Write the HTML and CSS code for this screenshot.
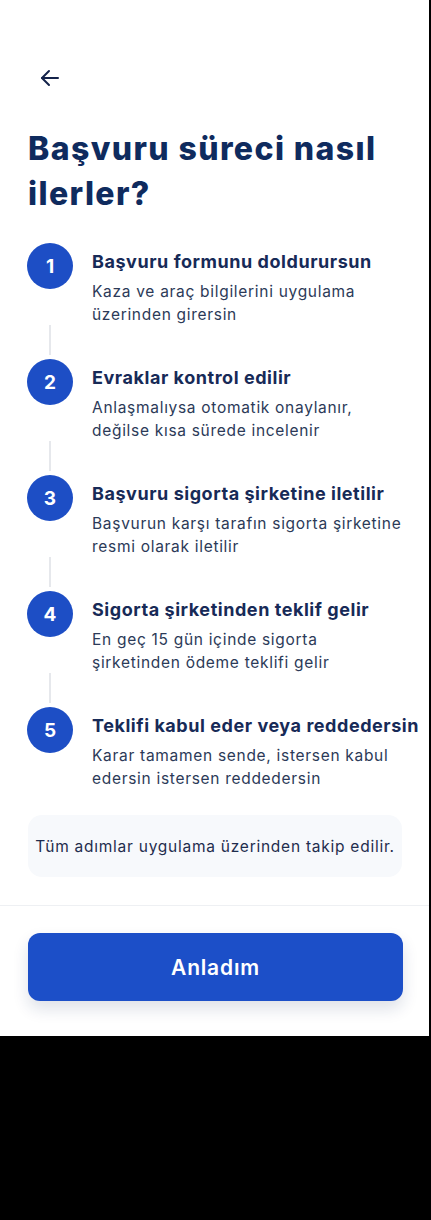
FILE: index.html
```html
<!DOCTYPE html>
<html lang="tr">
<head>
<meta charset="utf-8">
<title>Başvuru süreci</title>
<link rel="stylesheet" href="styles.css">
</head>
<body>
<div class="screen">
  <div class="content">
    <button class="back" aria-label="Geri">
      <svg width="24" height="24" viewBox="0 0 24 24" fill="none" stroke="currentColor" stroke-width="2" stroke-linecap="round" stroke-linejoin="round"><path d="M20 12H4"/><path d="M11 5l-7 7 7 7"/></svg>
    </button>
    <h1 class="title">Başvuru süreci nasıl ilerler?</h1>
    <ol class="steps">
      <li class="step">
        <div class="rail"><span class="num">1</span><span class="line"></span></div>
        <div class="text"><h2 class="step-title">Başvuru formunu doldurursun</h2><p class="step-desc">Kaza ve araç bilgilerini uygulama üzerinden girersin</p></div>
      </li>
      <li class="step">
        <div class="rail"><span class="num">2</span><span class="line"></span></div>
        <div class="text"><h2 class="step-title">Evraklar kontrol edilir</h2><p class="step-desc">Anlaşmalıysa otomatik onaylanır, değilse kısa sürede incelenir</p></div>
      </li>
      <li class="step">
        <div class="rail"><span class="num">3</span><span class="line"></span></div>
        <div class="text"><h2 class="step-title">Başvuru sigorta şirketine iletilir</h2><p class="step-desc">Başvurun karşı tarafın sigorta şirketine resmi olarak iletilir</p></div>
      </li>
      <li class="step">
        <div class="rail"><span class="num">4</span><span class="line"></span></div>
        <div class="text"><h2 class="step-title">Sigorta şirketinden teklif gelir</h2><p class="step-desc">En geç 15 gün içinde sigorta şirketinden ödeme teklifi gelir</p></div>
      </li>
      <li class="step">
        <div class="rail"><span class="num">5</span></div>
        <div class="text"><h2 class="step-title">Teklifi kabul eder veya reddedersin</h2><p class="step-desc">Karar tamamen sende, istersen kabul edersin istersen reddedersin</p></div>
      </li>
    </ol>
    <div class="info">Tüm adımlar uygulama üzerinden takip edilir.</div>
  </div>
  <div class="footer">
    <button class="cta">Anladım</button>
  </div>
</div>
</body>
</html>
```
FILE: styles.css
```css
* { box-sizing: border-box; }
html, body { margin: 0; padding: 0; }
body {
  background: #000;
  font-family: Inter, "Noto Sans", sans-serif;
  width: 431px;
  height: 1220px;
}
.screen {
  width: 429px;
  height: 1036px;
  background: #fff;
  display: flex;
  flex-direction: column;
}
.content {
  padding: 66px 27px 0 27px;
}
.back {
  display: flex;
  width: 24px;
  height: 24px;
  margin-left: 11px;
  padding: 0;
  border: 0;
  background: none;
  color: #14234a;
}
.title {
  margin: 36px 0 0 1px;
  font-size: 32px;
  line-height: 45px;
  font-weight: 800;
  color: #0f2b5e;
  letter-spacing: 1.4px;
}
.steps {
  list-style: none;
  margin: 27px 0 0 0;
  padding: 0;
  display: flex;
  flex-direction: column;
  gap: 4px;
}
.step {
  display: grid;
  grid-template-columns: 46px 1fr;
  column-gap: 19px;
}
.rail {
  display: flex;
  flex-direction: column;
  align-items: center;
}
.num {
  width: 46px;
  height: 46px;
  border-radius: 50%;
  background: #1d4ec5;
  color: #fff;
  font-weight: 700;
  font-size: 19px;
  display: flex;
  align-items: center;
  justify-content: center;
}
.line {
  width: 2px;
  height: 30px;
  margin-top: 36px;
  background: #e6e8ec;
}
.text { padding-top: 7px; }
.step-title {
  margin: 0;
  font-size: 18px;
  line-height: 24px;
  font-weight: 700;
  color: #172a57;
  letter-spacing: 0.55px;
  white-space: nowrap;
}
.step-desc {
  margin: 6px 0 0 0;
  font-size: 15.5px;
  line-height: 23px;
  letter-spacing: 0.7px;
  color: #2c3a58;
}
.info {
  margin: 25px 0 0 1px;
  width: 374px;
  height: 62px;
  border-radius: 14px;
  background: #f7f9fc;
  color: #1f2d4e;
  font-size: 15.5px;
  letter-spacing: 0.75px;
  display: flex;
  align-items: center;
  justify-content: center;
}
.footer {
  margin-top: 28px;
  border-top: 1px solid #eef0f3;
  padding: 27px 27px 0 27px;
}
.cta {
  display: block;
  width: 375px;
  height: 68px;
  margin-left: 1px;
  border: 0;
  border-radius: 12px;
  background: #1c4fc8;
  color: #fff;
  font-family: inherit;
  font-size: 21px;
  font-weight: 600;
  letter-spacing: 0.8px;
  box-shadow: 0 8px 16px rgba(20, 40, 90, 0.14);
}
```
